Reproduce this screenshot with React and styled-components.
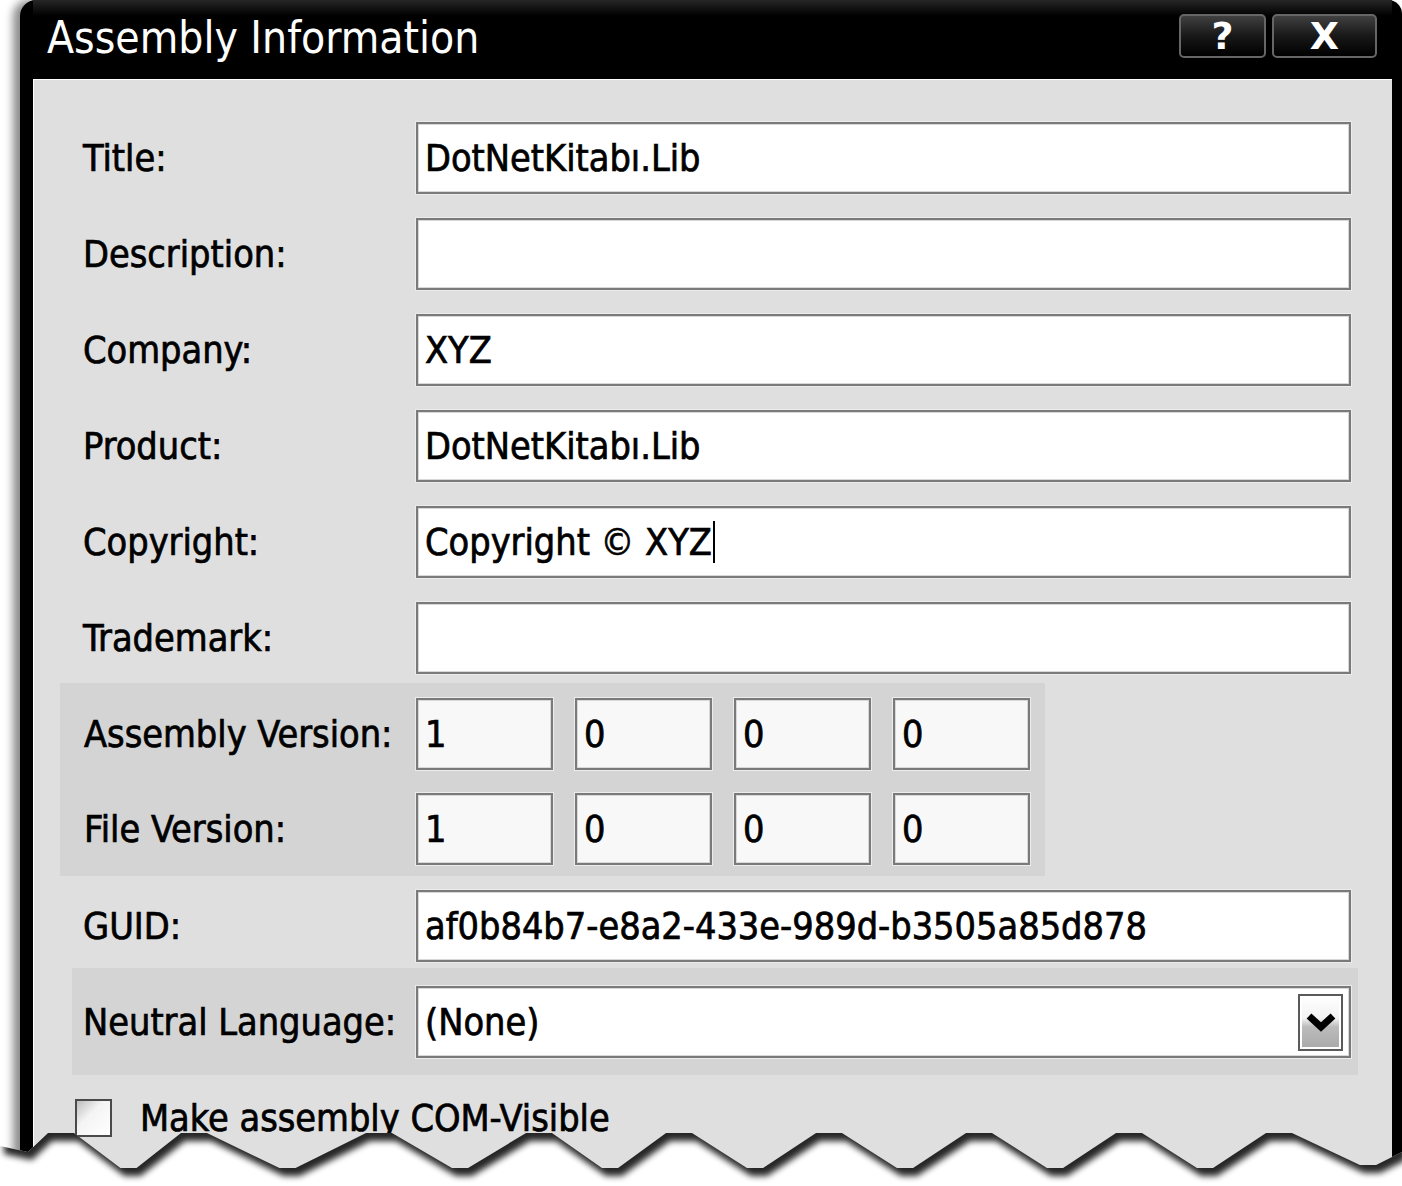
import React from 'react'
import styled, { createGlobalStyle } from 'styled-components'

const GlobalStyle = createGlobalStyle`
  html, body {
    margin: 0;
    padding: 0;
    background: #fff;
  }
  body {
    font-family: "DejaVu Sans Condensed", "DejaVu Sans", sans-serif;
    color: #000;
  }
`

const Page = styled.div`
  position: relative;
  width: 1402px;
  height: 1186px;
  overflow: hidden;
  background: #fff;
`

const Window = styled.div`
  margin-left: 20px;
  width: 1382px;
  height: 1186px;
  box-sizing: border-box;
  background: #000;
  border-radius: 16px 14px 0 0;
  padding: 0 10px 0 13px;
  display: flex;
  flex-direction: column;
  box-shadow: -7px 0 9px rgba(0, 0, 0, 0.45);
`

const TitleBar = styled.div`
  height: 79px;
  flex-shrink: 0;
  display: flex;
  align-items: flex-start;
  justify-content: space-between;
  background: linear-gradient(#262626 0, #000 16px, #000 100%);
`

const Caption = styled.div`
  margin: 13px 0 0 14px;
  color: #fff;
  font-size: 44px;
  line-height: 50px;
`

const Controls = styled.div`
  display: flex;
  gap: 6px;
  margin: 14px 15px 0 0;
`

const CtlButton = styled.div`
  box-sizing: border-box;
  width: ${p => p.$w}px;
  height: 44px;
  border: 2px solid #666;
  border-radius: 5px;
  background: linear-gradient(#404040, #181818 50%, #000);
  color: #fff;
  font-family: "DejaVu Sans", sans-serif;
  font-weight: bold;
  font-size: 38px;
  line-height: 40px;
  text-align: center;
`

const Content = styled.div`
  flex: 1;
  background: #dfdfdf;
  border-top: 1px solid #fff;
  border-left: 1px solid #fff;
  padding: 42px 41px 0 49px;
  display: flex;
  flex-direction: column;
  font-size: 37.5px;
  -webkit-text-stroke: 0.7px #000;
`

const Row = styled.div`
  display: flex;
  align-items: center;
  height: 72px;
  margin-bottom: ${p => p.$gap ?? 24}px;
`

const Label = styled.div`
  width: ${p => p.$w || 333}px;
  flex-shrink: 0;
  white-space: nowrap;
`

const Field = styled.div`
  flex: ${p => (p.$w ? 'none' : 1)};
  width: ${p => (p.$w ? `${p.$w}px` : 'auto')};
  box-sizing: border-box;
  height: 72px;
  border: 2px solid #7a7a7a;
  box-shadow: inset 0 0 0 1px #d8d8d8, 0 0 0 1px #ececec;
  background: ${p => (p.$w ? '#f8f8f8' : '#fff')};
  padding: 0 0 0 7px;
  display: flex;
  align-items: center;
  white-space: nowrap;
`

const Caret = styled.span`
  display: inline-block;
  width: 2px;
  height: 42px;
  background: #000;
  margin-left: 1px;
`

const Shaded = styled.div`
  background: #d4d4d4;
  display: flex;
  flex-direction: column;
`

const VersionGroup = styled(Shaded)`
  align-self: flex-start;
  margin: 0 0 14px -23px;
  padding: 15px 15px 11px 24px;
`

const VersionBoxes = styled.div`
  display: flex;
  gap: 22px;
`

const LanguageGroup = styled(Shaded)`
  margin: 0 -7px 0 -11px;
  padding: 18px 7px 17px 11px;
`

const Select = styled(Field)`
  justify-content: space-between;
  padding-right: 6px;
`

const DropButton = styled.div`
  box-sizing: border-box;
  width: 45px;
  height: 57px;
  border: 2px solid #5a5a5a;
  box-shadow: inset 0 0 0 2px #fff;
  background: linear-gradient(#fff 0%, #f2f2f2 42%, #bcbcbc 58%, #a9a9a9 100%);
  display: flex;
  align-items: center;
  justify-content: center;
`

const CheckRow = styled.label`
  display: flex;
  align-items: center;
  gap: 28px;
  margin: 21px 0 0 -8px;
`

const CheckBox = styled.span`
  box-sizing: border-box;
  width: 37px;
  height: 38px;
  border: 2px solid #4a4a4a;
  background: linear-gradient(135deg, #bdbdbd 0%, #f4f4f4 40%, #fff 100%);
`

const TornEdge = styled.svg`
  position: absolute;
  left: 0;
  top: 1110px;
`

const TOP = 1110
const notches = [62, 195, 380, 540, 680, 830, 980, 1130, 1280]

function edgePoints() {
  const pts = [[0, 1146 - TOP], [28, 1152 - TOP]]
  let prev = null
  notches.forEach(c => {
    if (prev !== null) {
      const m = (prev + c) / 2
      pts.push([m - 8, 1168 - TOP], [m + 8, 1168 - TOP])
    }
    pts.push([c - 14, 1133 - TOP], [c + 12, 1133 - TOP])
    prev = c
  })
  pts.push([1360, 1165 - TOP], [1376, 1165 - TOP], [1402, 1152 - TOP])
  return pts
}

function Torn() {
  const pts = edgePoints()
  const line = pts.map(([x, y]) => `${x},${y}`).join(' L')
  const below = `M${line} L1402,80 L0,80 Z`
  const above = `M${line} L1402,-60 L0,-60 Z`
  return (
    <TornEdge width="1402" height="76" viewBox="0 0 1402 76">
      <defs>
        <clipPath id="below">
          <path d={below} />
        </clipPath>
        <filter id="blur" x="-10%" y="-50%" width="120%" height="200%">
          <feGaussianBlur stdDeviation="3" />
        </filter>
      </defs>
      <path d={below} fill="#fff" />
      <g clipPath="url(#below)">
        <path d={above} transform="translate(4 8)" fill="#000" opacity="0.85" filter="url(#blur)" />
      </g>
    </TornEdge>
  )
}

const textRows = [
  ['Title:', 'DotNetKitabı.Lib'],
  ['Description:', ''],
  ['Company:', 'XYZ'],
  ['Product:', 'DotNetKitabı.Lib'],
  ['Copyright:', 'Copyright © XYZ', true],
  ['Trademark:', ''],
]

const versions = [
  ['Assembly Version:', ['1', '0', '0', '0']],
  ['File Version:', ['1', '0', '0', '0']],
]

export default function App() {
  return (
    <Page>
      <GlobalStyle />
      <Window>
        <TitleBar>
          <Caption>Assembly Information</Caption>
          <Controls>
            <CtlButton $w={87}>?</CtlButton>
            <CtlButton $w={105}>X</CtlButton>
          </Controls>
        </TitleBar>
        <Content>
          {textRows.map(([label, value, caret], i) => (
            <Row key={label} $gap={i === textRows.length - 1 ? 9 : 24}>
              <Label>{label}</Label>
              <Field>
                {value}
                {caret && <Caret />}
              </Field>
            </Row>
          ))}
          <VersionGroup>
            {versions.map(([label, parts], i) => (
              <Row key={label} $gap={i === 0 ? 23 : 0}>
                <Label $w={332}>{label}</Label>
                <VersionBoxes>
                  {parts.map((p, j) => (
                    <Field key={j} $w={137}>{p}</Field>
                  ))}
                </VersionBoxes>
              </Row>
            ))}
          </VersionGroup>
          <Row $gap={6}>
            <Label>GUID:</Label>
            <Field>af0b84b7-e8a2-433e-989d-b3505a85d878</Field>
          </Row>
          <LanguageGroup>
            <Row $gap={0}>
              <Label>Neutral Language:</Label>
              <Select>
                (None)
                <DropButton>
                  <svg width="32" height="22" viewBox="0 0 32 22">
                    <path d="M4 5 L16 16 L28 5" fill="none" stroke="#000" strokeWidth="7" />
                  </svg>
                </DropButton>
              </Select>
            </Row>
          </LanguageGroup>
          <CheckRow>
            <CheckBox />
            Make assembly COM-Visible
          </CheckRow>
        </Content>
      </Window>
      <Torn />
    </Page>
  )
}
